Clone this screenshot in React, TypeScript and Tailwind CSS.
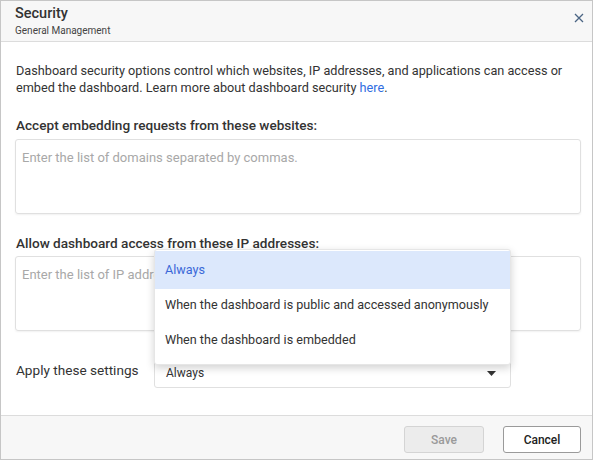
import React from "react";

export default function App() {
  return (
    <div className="w-[593px] h-[460px] bg-white" style={{ fontFamily: "Roboto, 'Liberation Sans', sans-serif" }}>
      <div className="relative flex h-full w-full flex-col border border-[#c6c6c6] text-[#333]">
        {/* Header */}
        <div className="flex h-[41px] shrink-0 items-start justify-between border-b border-[#dcdcdc] bg-[#f7f7f7] pl-[14px] pr-[7px]">
          <div className="flex flex-col">
            <div className="mt-[3px] text-[14.5px] font-medium leading-[20px] text-[#333]">Security</div>
            <div className="mt-[0px] text-[10px] leading-[13px] text-[#444]">General Management</div>
          </div>
          <button className="mt-[11px] flex h-[12px] w-[12px] items-center justify-center">
            <svg width="10" height="10" viewBox="0 0 10 10">
              <path d="M1 1L9 9M9 1L1 9" stroke="#4b6584" strokeWidth="1.3" />
            </svg>
          </button>
        </div>

        {/* Body */}
        <div className="flex flex-1 flex-col pl-[14px] pr-[11px] pt-[20px]">
          <p className="pl-[1px] text-[12.7px] leading-[17px] text-[#333]">
            Dashboard security options control which websites, IP addresses, and applications can access or embed the dashboard. Learn more about dashboard security{" "}
            <span className="text-[#2f6de1]">here</span>.
          </p>

          <div className="mt-[21px] pl-[1px] text-[13.6px] font-medium leading-[17px] text-[#333]">Accept embedding requests from these websites:</div>
          <div className="mt-[5px] h-[75px] rounded-[3px] border border-[#e0e0e0] px-[6px] pt-[9px] text-[13px] leading-[17px] text-[#a8a8a8] shadow-[0_1px_2px_rgba(0,0,0,0.06)]">
            Enter the list of domains separated by commas.
          </div>

          <div className="mt-[21px] pl-[1px] text-[13.6px] font-medium leading-[17px] text-[#333]">Allow dashboard access from these IP addresses:</div>
          <div className="mt-[4px] h-[75px] rounded-[3px] border border-[#e0e0e0] px-[6px] pt-[9px] text-[13px] leading-[17px] text-[#a8a8a8] shadow-[0_1px_2px_rgba(0,0,0,0.06)]">
            Enter the list of IP addresses
          </div>

          <div className="mt-[26px] flex items-start">
            <div className="mt-[5px] w-[139px] pl-[1px] text-[13.6px] leading-[17px] text-[#333]">Apply these settings</div>
            <div className="relative h-[31px] w-[357px]">
              <div className="flex h-full items-center justify-between rounded-[3px] border border-[#e0e0e0] pl-[11px] pr-[14px] text-[12px] text-[#333]">
                <span className="mt-[1px]">Always</span>
                <svg width="9" height="5" viewBox="0 0 9 5" className="mt-[1px]">
                  <path d="M0 0H9L4.5 5Z" fill="#333" />
                </svg>
              </div>
              {/* Dropdown menu */}
              <div className="absolute bottom-[23px] left-0 z-10 w-[357px] rounded-[3px] border border-[#e6e6e6] bg-white pt-[1px] pb-[6px] shadow-[0_3px_8px_rgba(0,0,0,0.18)]">
                <div className="flex h-[38px] items-center bg-[#dce8fc] pl-[10px] text-[12.6px] text-[#3b68d8]">Always</div>
                <div className="flex h-[33px] items-center pl-[10px] text-[12.6px] text-[#333]">When the dashboard is public and accessed anonymously</div>
                <div className="flex h-[36px] items-center pl-[10px] text-[12.6px] text-[#333]">When the dashboard is embedded</div>
              </div>
            </div>
          </div>
        </div>

        {/* Footer */}
        <div className="flex h-[44px] shrink-0 items-start justify-end gap-[19px] border-t border-[#dcdcdc] bg-[#f7f7f7] pr-[11px] pt-[10px]">
          <button className="h-[27px] w-[80px] rounded-[3px] border border-[#d4d4d4] bg-[#ececec] text-[12px] font-medium text-[#9a9a9a]">Save</button>
          <button className="h-[27px] w-[78px] rounded-[3px] border border-[#9a9a9a] bg-white text-[12px] font-medium text-[#222]">Cancel</button>
        </div>
      </div>
    </div>
  );
}
